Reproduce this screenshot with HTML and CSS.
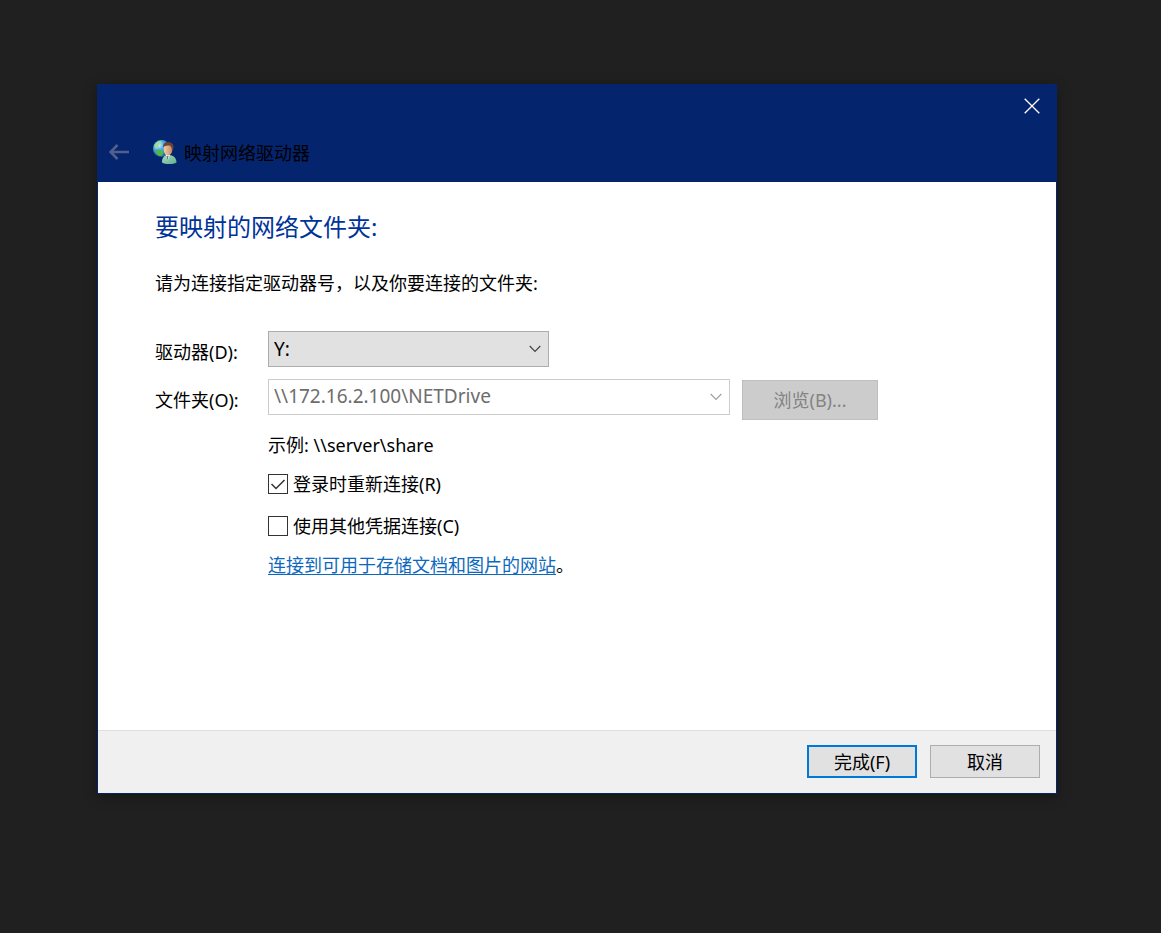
FILE: index.html
```html
<!DOCTYPE html>
<html lang="zh-CN">
<head>
<meta charset="utf-8">
<meta name="viewport" content="width=device-width, initial-scale=1">
<title>映射网络驱动器</title>
<link rel="stylesheet" href="styles.css">
</head>
<body>
<main class="dialog">
  <header class="titlebar">
    <button class="close" type="button" aria-label="关闭">
      <svg width="16" height="16" viewBox="0 0 16 16"><path d="M.7.7l14.600 14.600M15.300.7L.7 15.300" fill="none" stroke="#fff" stroke-width="1.300"/></svg>
    </button>
    <div class="caption">
      <button class="back" type="button" aria-label="返回" disabled>
        <svg width="20" height="16" viewBox="0 0 20 16"><path d="M1.500 8H20M8.500 1L1.500 8l7 7" fill="none" stroke="#505f8c" stroke-width="2.600"/></svg>
      </button>
      <svg class="logo" width="26" height="26" viewBox="0 0 26 26" aria-hidden="true">
        <defs>
          <radialGradient id="globe" cx=".35" cy=".3" r=".75">
            <stop offset="0" stop-color="#d4f3ff"/><stop offset=".35" stop-color="#52b4ec"/><stop offset="1" stop-color="#1457ae"/>
          </radialGradient>
          <linearGradient id="coat" x1="0" y1="0" x2="1" y2="1">
            <stop offset="0" stop-color="#a9dcc0"/><stop offset="1" stop-color="#5fae8e"/>
          </linearGradient>
          <linearGradient id="face" x1="0" y1="0" x2="1" y2="0">
            <stop offset="0" stop-color="#f2cda6"/><stop offset="1" stop-color="#c58d64"/>
          </linearGradient>
        </defs>
        <circle cx="9.500" cy="9.500" r="8.500" fill="url(#globe)"/>
        <path d="M2 6.500C4 3 7 1.500 9 2l1 2-3 2-1 3-3 1z" fill="#a5dc8e" opacity=".85"/>
        <path d="M3.500 12l4-1.500 4 2-1 4-3 .5C5 16 4 14.500 3.500 12z" fill="#53b83c"/>
        <path d="M10 23.500c0-5 2-7.500 6.500-7.500 5 0 8 3 8 7.500-3 2-11.500 2-14.500 0z" fill="url(#coat)"/>
        <path d="M13.500 15l2 7 2.500-6z" fill="#f3f6f4"/>
        <path d="M14.500 17l1 5 1-5z" fill="#4c8777"/>
        <ellipse cx="16" cy="10.500" rx="4.300" ry="6" fill="url(#face)"/>
        <path d="M11 8c0-4 3-5.500 5.500-5 3.500 0 5.500 3 5 6.500l-1.500 3c0-3-.5-5-2.500-6-2 0-4.500 0-6.500 1.500z" fill="#6b4538"/>
      </svg>
      <span class="caption-text">映射网络驱动器</span>
    </div>
  </header>

  <form class="wizard">
    <section class="content">
      <h1 class="heading">要映射的网络文件夹:</h1>
      <p class="intro">请为连接指定驱动器号，以及你要连接的文件夹:</p>

      <div class="row">
        <label class="label" for="drive">驱动器(D):</label>
        <div class="combo combo-drive">
          <select id="drive" class="select"><option>Y:</option></select>
          <svg class="chevron" width="12" height="8" viewBox="0 0 12 8"><path d="M.7 1L6 6.300 11.300 1" fill="none" stroke="#444" stroke-width="1.200"/></svg>
        </div>
      </div>

      <div class="row">
        <label class="label" for="folder">文件夹(O):</label>
        <div class="combo combo-folder">
          <select id="folder" class="select" disabled><option>\\172.16.2.100\NETDrive</option></select>
          <svg class="chevron" width="12" height="8" viewBox="0 0 12 8"><path d="M.7 1L6 6.300 11.300 1" fill="none" stroke="#a0a0a0" stroke-width="1.200"/></svg>
        </div>
        <button class="browse" type="button" disabled>浏览(B)...</button>
      </div>

      <div class="options">
        <p class="example">示例: \\server\share</p>
        <label class="option"><input class="check" type="checkbox" checked>登录时重新连接(R)</label>
        <label class="option"><input class="check" type="checkbox">使用其他凭据连接(C)</label>
        <p class="more"><a class="link" href="#">连接到可用于存储文档和图片的网站</a>。</p>
      </div>
    </section>

    <footer class="actions">
      <button class="button button-default" type="submit">完成(F)</button>
      <button class="button" type="button">取消</button>
    </footer>
  </form>
</main>
</body>
</html>
```
FILE: styles.css
```css
* {
  box-sizing: border-box;
}

body {
  margin: 0;
  min-height: 100vh;
  padding: 84px 104px 139px 97px;
  display: flex;
  background: #202020;
  color: #000;
  font: 18px/24px "Noto Sans", "Noto Sans CJK SC", sans-serif;
}

h1,
p {
  margin: 0;
}

button,
select {
  font: inherit;
  color: inherit;
  padding: 0;
}

svg {
  display: block;
}

.dialog {
  flex: 1;
  min-width: 0;
  display: flex;
  flex-direction: column;
  border: 1px solid #05246e;
  background: #fff;
  box-shadow: 0 3px 12px rgba(0, 0, 0, 0.35);
}

.titlebar {
  display: flex;
  flex-direction: column;
  background: #05246e;
  padding-bottom: 15px;
}

.close,
.back {
  border: 0;
  background: none;
}

.close {
  align-self: flex-end;
  padding: 13px 16px 15px;
}

.caption {
  display: flex;
  align-items: center;
  padding: 8px 11px 0;
}

.logo {
  margin: 0 6px 0 23px;
}

.caption-text {
  padding-top: 2px;
  line-height: 28px;
}

.wizard {
  flex: 1;
  display: flex;
  flex-direction: column;
}

.content {
  flex: 1;
  padding: 29px 57px;
}

.heading {
  color: #003399;
  font-size: 24px;
  line-height: 32px;
  font-weight: 400;
}

.intro {
  margin: 28px 0 36px;
}

.row {
  display: flex;
  align-items: flex-start;
  margin-bottom: 12px;
}

.label {
  width: 113px;
  padding-top: 9px;
}

.combo {
  position: relative;
  height: 36px;
}

.combo-drive {
  width: 281px;
}

.combo-folder {
  width: 462px;
  margin-right: 12px;
}

.select {
  appearance: none;
  width: 100%;
  height: 100%;
  padding: 0 28px 0 5px;
  border: 1px solid #adadad;
  border-radius: 0;
  background: #e1e1e1;
  font-size: 19px;
}

.select:disabled {
  padding-bottom: 2px;
  border-color: #cccccc;
  background: #fff;
  color: #6d6d6d;
  opacity: 1;
}

.chevron {
  position: absolute;
  right: 8px;
  top: 14px;
  pointer-events: none;
}

.browse {
  width: 136px;
  height: 40px;
  margin-top: 1px;
  border: 1px solid #bfbfbf;
  background: #cccccc;
  color: #838383;
}

.options {
  padding: 1px 0 0 113px;
}

.option {
  display: flex;
  align-items: center;
  gap: 5px;
  margin-top: 18px;
}

.example + .option {
  margin-top: 15px;
}

.more {
  margin-top: 15px;
}

.check {
  appearance: none;
  width: 20px;
  height: 20px;
  margin: 0;
  border: 1px solid #333;
  background: #fff;
}

.check:checked {
  background: #fff url("data:image/svg+xml,%3Csvg xmlns='http://www.w3.org/2000/svg' viewBox='0 0 18 18'%3E%3Cpath d='M2.500 9l4.500 4.500L15.500 5' fill='none' stroke='%23333' stroke-width='1.500'/%3E%3C/svg%3E") center / 18px 18px no-repeat;
}

.link {
  color: #0c69bd;
  text-decoration-thickness: 1px;
  text-underline-offset: 2px;
}

.actions {
  display: flex;
  justify-content: flex-end;
  gap: 13px;
  padding: 14px 16px 15px;
  border-top: 1px solid #dfdfdf;
  background: #f0f0f0;
}

.button {
  width: 110px;
  height: 33px;
  border: 1px solid #adadad;
  background: #e1e1e1;
}

.button-default {
  border: 2px solid #0078d7;
}
```
